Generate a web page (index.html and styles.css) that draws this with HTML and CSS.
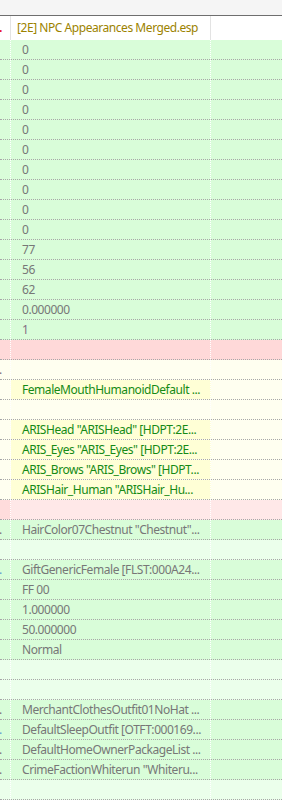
FILE: index.html
```html
<!DOCTYPE html>
<html>
<head>
<meta charset="utf-8">
<link rel="stylesheet" href="styles.css">
</head>
<body>
<div class="topbar"></div>
<div class="header">
  <div class="c1"><span class="hdot">.</span></div>
  <div class="c2">[2E] NPC Appearances Merged.esp</div>
  <div class="c3"></div>
</div>
<div class="grid">
  <div class="row g"><div class="c1"></div><div class="c2">0</div><div class="c3"></div></div>
  <div class="row g"><div class="c1"></div><div class="c2">0</div><div class="c3"></div></div>
  <div class="row g"><div class="c1"></div><div class="c2">0</div><div class="c3"></div></div>
  <div class="row g"><div class="c1"></div><div class="c2">0</div><div class="c3"></div></div>
  <div class="row g"><div class="c1"></div><div class="c2">0</div><div class="c3"></div></div>
  <div class="row g"><div class="c1"></div><div class="c2">0</div><div class="c3"></div></div>
  <div class="row g"><div class="c1"></div><div class="c2">0</div><div class="c3"></div></div>
  <div class="row g"><div class="c1"></div><div class="c2">0</div><div class="c3"></div></div>
  <div class="row g"><div class="c1"></div><div class="c2">0</div><div class="c3"></div></div>
  <div class="row g"><div class="c1"></div><div class="c2">0</div><div class="c3"></div></div>
  <div class="row g"><div class="c1"></div><div class="c2">77</div><div class="c3"></div></div>
  <div class="row g"><div class="c1"></div><div class="c2">56</div><div class="c3"></div></div>
  <div class="row g"><div class="c1"></div><div class="c2">62</div><div class="c3"></div></div>
  <div class="row g"><div class="c1"></div><div class="c2">0.000000</div><div class="c3"></div></div>
  <div class="row g"><div class="c1"></div><div class="c2 purple">1</div><div class="c3"></div></div>
  <div class="row p"><div class="c1"></div><div class="c2"></div><div class="c3"></div></div>
  <div class="row y"><div class="c1 dot">.</div><div class="c2"></div><div class="c3"></div></div>
  <div class="row y"><div class="c1"></div><div class="c2 hl">FemaleMouthHumanoidDefault ...</div><div class="c3"></div></div>
  <div class="row y"><div class="c1"></div><div class="c2"></div><div class="c3"></div></div>
  <div class="row y"><div class="c1"></div><div class="c2 hl">ARISHead "ARISHead" [HDPT:2E...</div><div class="c3"></div></div>
  <div class="row y"><div class="c1"></div><div class="c2 hl">ARIS_Eyes "ARIS_Eyes" [HDPT:2E...</div><div class="c3"></div></div>
  <div class="row y"><div class="c1"></div><div class="c2 hl">ARIS_Brows "ARIS_Brows" [HDPT...</div><div class="c3"></div></div>
  <div class="row y"><div class="c1"></div><div class="c2 hl">ARISHair_Human "ARISHair_Hu...</div><div class="c3"></div></div>
  <div class="row p2"><div class="c1"></div><div class="c2"></div><div class="c3"></div></div>
  <div class="row g"><div class="c1 dot">.</div><div class="c2">HairColor07Chestnut "Chestnut"...</div><div class="c3"></div></div>
  <div class="row lg"><div class="c1"></div><div class="c2"></div><div class="c3"></div></div>
  <div class="row g"><div class="c1 dot blue">.</div><div class="c2">GiftGenericFemale [FLST:000A24...</div><div class="c3"></div></div>
  <div class="row g"><div class="c1"></div><div class="c2">FF 00</div><div class="c3"></div></div>
  <div class="row g"><div class="c1"></div><div class="c2">1.000000</div><div class="c3"></div></div>
  <div class="row g"><div class="c1"></div><div class="c2">50.000000</div><div class="c3"></div></div>
  <div class="row g"><div class="c1"></div><div class="c2">Normal</div><div class="c3"></div></div>
  <div class="row lg"><div class="c1"></div><div class="c2"></div><div class="c3"></div></div>
  <div class="row lg"><div class="c1"></div><div class="c2"></div><div class="c3"></div></div>
  <div class="row g"><div class="c1 dot">.</div><div class="c2">MerchantClothesOutfit01NoHat ...</div><div class="c3"></div></div>
  <div class="row g"><div class="c1 dot blue">.</div><div class="c2">DefaultSleepOutfit [OTFT:000169...</div><div class="c3"></div></div>
  <div class="row g"><div class="c1 dot">.</div><div class="c2">DefaultHomeOwnerPackageList ...</div><div class="c3"></div></div>
  <div class="row g"><div class="c1 dot">.</div><div class="c2">CrimeFactionWhiterun "Whiteru...</div><div class="c3"></div></div>
  <div class="row lg"><div class="c1"></div><div class="c2"></div><div class="c3"></div></div>
</div>
</body>
</html>
```

FILE: styles.css
```css
html, body {
  margin: 0;
  padding: 0;
  background: #ffffff;
}
body {
  font-family: "Noto Sans", "DejaVu Sans", sans-serif;
  font-size: 12px;
  letter-spacing: -0.45px;
  overflow: hidden;
  height: 800px;
}
.topbar {
  height: 15px;
  background: #f5f5f5;
  border-bottom: 1px solid #6e6e6e;
}
.header {
  display: grid;
  grid-template-columns: 11px 200px 1fr;
  height: 24px;
  line-height: 24px;
  background: #ffffff;
}
.header .c1,
.header .c2 {
  border-right: 1px solid #e3e3e3;
}
.header .c1 {
  overflow: hidden;
  color: #e81030;
}
.hdot {
  display: inline-block;
  margin-left: -1px;
  font-weight: bold;
}
.header .c2 {
  color: #9c8200;
  padding-left: 6px;
  white-space: nowrap;
  overflow: hidden;
}
.row {
  display: grid;
  grid-template-columns: 11px 200px 1fr;
  height: 20px;
  box-sizing: border-box;
  border-bottom: 1px dotted #a8a8a8;
  line-height: 19px;
  color: #777777;
}
.row .c1,
.row .c2 {
  border-right: 1px dotted #ffffff;
}
.row .c1 {
  overflow: hidden;
  white-space: nowrap;
}
.row .c2 {
  padding-left: 11px;
  white-space: nowrap;
  overflow: hidden;
}
.dot {
  text-indent: -1px;
  color: #7a6f7a;
}
.dot.blue {
  color: #5a9ad0;
}
.g { background: #d9fdd9; }
.lg { background: #ebffeb; }
.p { background: #ffd9d9; }
.p2 { background: #ffe8e8; }
.p2 .c1 { background: #ffdcdc; }
.y { background: #fffff0; }
.y .c2.hl {
  background: #ffffd6;
  color: #158a15;
}
.purple { color: #846f84; }
```
